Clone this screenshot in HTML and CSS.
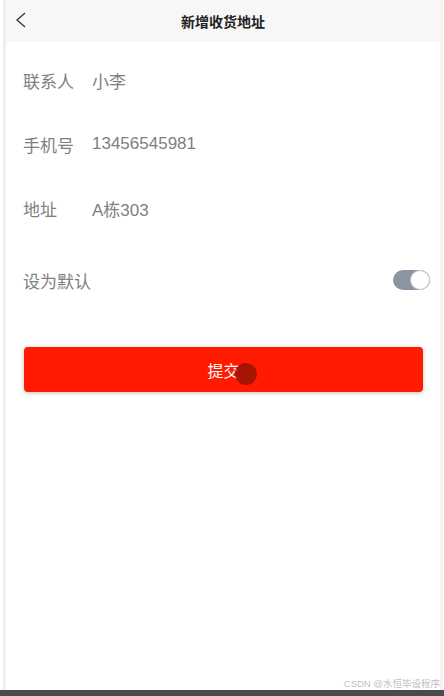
FILE: index.html
```html
<!DOCTYPE html>
<html lang="zh-CN">
<head>
  <meta charset="UTF-8">
  <meta name="viewport" content="width=device-width, initial-scale=1.0">
  <title>新增收货地址</title>
  <link rel="stylesheet" href="styles.css">
</head>
<body>
  <div class="phone">
    <div class="navbar">
      <svg class="back" width="14" height="18" viewBox="0 0 14 18">
        <path d="M11 2 L3 9 L11 16" fill="none" stroke="#333" stroke-width="1.3"/>
      </svg>
      <span class="title">新增收货地址</span>
    </div>

    <div class="form">
      <div class="row">
        <span class="label">联系人</span>
        <span class="value">小李</span>
      </div>
      <div class="row">
        <span class="label">手机号</span>
        <span class="value">13456545981</span>
      </div>
      <div class="row">
        <span class="label">地址</span>
        <span class="value">A栋303</span>
      </div>
      <div class="row row-switch">
        <span class="label">设为默认</span>
        <span class="switch"><span class="knob"></span></span>
      </div>
    </div>

    <div class="actions">
      <button class="submit">提交<span class="cursor"></span></button>
    </div>

    <div class="watermark">CSDN @水恒毕设程序</div>
  </div>
  <div class="taskbar"></div>
</body>
</html>
```

FILE: styles.css
```css
body {
  margin: 0;
  background: #fff;
  font-family: "Liberation Sans", "Noto Sans CJK SC", sans-serif;
}
.phone {
  position: relative;
  height: 690px;
  margin-left: 3px;
  border-left: 3px solid #efefef;
  border-right: 3px solid #f3f3f3;
  margin-right: 1px;
  background: #fff;
}
.navbar {
  position: relative;
  height: 42px;
  background: #f7f7f7;
  display: flex;
  align-items: center;
  justify-content: center;
}
.back {
  position: absolute;
  left: 8px;
  top: 11px;
}
.title {
  font-size: 14px;
  font-weight: bold;
  color: #222;
}
.form {
  padding: 6px 0 0 17px;
}
.row {
  height: 64px;
  display: flex;
  align-items: center;
  font-size: 17px;
  color: #808080;
}
.row-switch {
  height: 80px;
  justify-content: space-between;
  padding-right: 10px;
}
.label {
  width: 69px;
}
.switch {
  width: 37px;
  height: 20px;
  border-radius: 10px;
  background: #8a95a1;
  display: flex;
  align-items: center;
  justify-content: flex-end;
  padding-right: 1px;
  box-sizing: border-box;
}
.knob {
  width: 18px;
  height: 18px;
  border-radius: 50%;
  background: #fff;
  box-shadow: 0 0 0 1px #c4cad0;
}
.actions {
  padding: 27px 17px 0 18px;
}
.submit {
  position: relative;
  width: 100%;
  height: 45px;
  border: none;
  border-radius: 4px;
  background: #ff1a00;
  color: #fff;
  font-family: "Liberation Sans", "Noto Sans CJK SC", sans-serif;
  font-size: 16px;
  box-shadow: 0 1px 4px rgba(0, 0, 0, 0.25);
}
.cursor {
  position: absolute;
  left: 211px;
  top: 16px;
  width: 22px;
  height: 22px;
  border-radius: 50%;
  background: rgba(150, 20, 5, 0.85);
}
.watermark {
  position: absolute;
  right: 0;
  bottom: 0;
  font-size: 9.5px;
  color: #c0c0c0;
}
.taskbar {
  height: 6px;
  background: #4a4a4a;
}
```
